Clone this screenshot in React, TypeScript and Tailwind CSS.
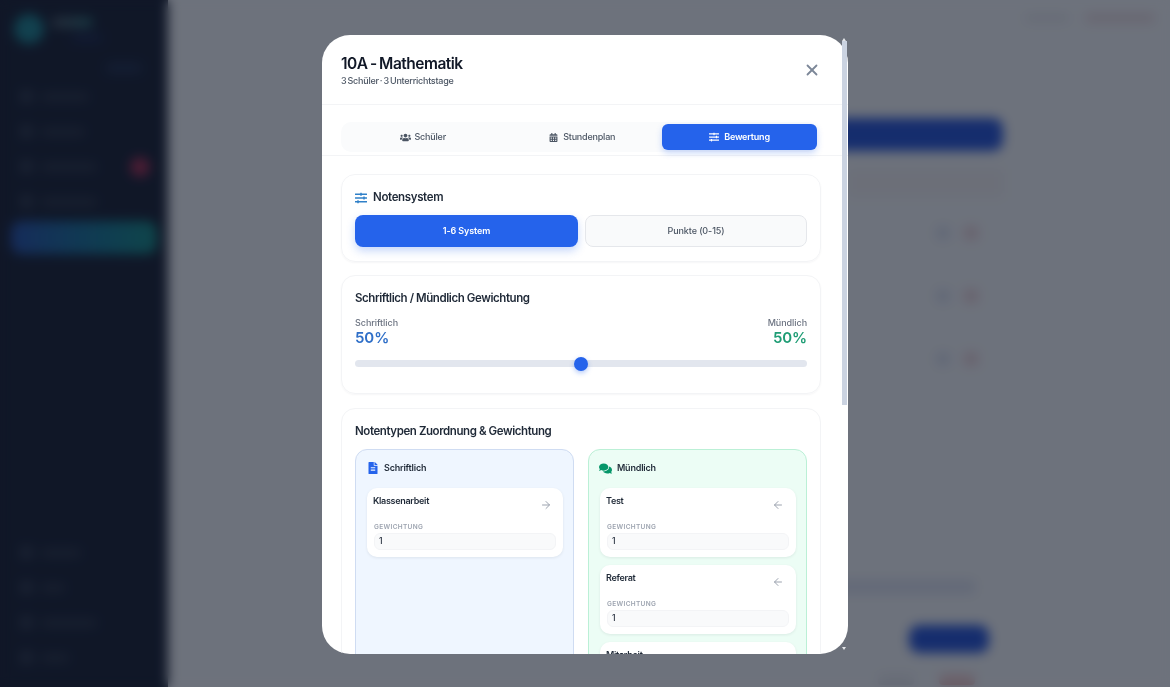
import { FaUsers, FaCalendarAlt, FaSlidersH, FaFileAlt, FaComments } from "react-icons/fa";
import { FiArrowLeft, FiArrowRight, FiX } from "react-icons/fi";

function NavBlob({ w, badge }: { w: string; badge?: boolean }) {
  return (
    <div className="flex items-center gap-[8px] h-[35px] pl-[20px] pr-[18px]">
      <div className="w-[13px] h-[13px] rounded bg-[#2a3446]" />
      <div className={`h-[8px] rounded bg-[#262f40] ${w}`} />
      {badge ? <div className="ml-auto w-[20px] h-[20px] rounded-full bg-[#a3264a]" /> : null}
    </div>
  );
}

function RowActions({ className }: { className: string }) {
  return (
    <div className={`flex justify-end gap-[14px] pr-[25px] ${className}`}>
      <div className="w-[14px] h-[14px] rounded bg-[#dce2f0]" />
      <div className="w-[14px] h-[14px] rounded bg-[#ecd3d8]" />
    </div>
  );
}

function TypeCard({ name, dir, nameOnly }: { name: string; dir: "left" | "right"; nameOnly?: boolean }) {
  return (
    <div className="bg-white rounded-[10px] px-[7px] pt-[7px] h-[69px] shrink-0 shadow-[0_1px_3px_rgba(15,23,42,0.08)]">
      <div className="flex items-start justify-between">
        <span className="text-[9px] leading-[12px] font-semibold tracking-[-0.3px] text-[#1f2937] ml-[-1px]">{name}</span>
        {nameOnly ? null : dir === "left" ? (
          <span className="mt-[4px] mr-[5px] text-[#9ca3af]">
            <FiArrowLeft className="w-[12px] h-[12px]" />
          </span>
        ) : (
          <span className="mt-[4px] mr-[4px] text-[#9ca3af]">
            <FiArrowRight className="w-[12px] h-[12px]" />
          </span>
        )}
      </div>
      {nameOnly ? null : (
        <>
          <div className="mt-[12px] text-[6.5px] leading-[8px] font-semibold tracking-[0.35px] text-[#9ca3af]">GEWICHTUNG</div>
          <div className="mt-[2px] h-[17px] rounded-[6px] bg-[#f9fafb] border border-[#f3f4f6] flex items-center pl-[4px] text-[8.5px] font-medium text-[#1f2937]">1</div>
        </>
      )}
    </div>
  );
}

export default function App() {
  return (
    <div className="relative w-[1170px] h-[687px] overflow-hidden bg-[#f8fafc] flex" style={{ fontFamily: "Inter, 'Noto Sans', sans-serif" }}>
      <aside className="w-[168px] h-full shrink-0 bg-[#0f172a] flex flex-col pt-[14px]">
        <div className="flex items-start gap-[8px] pl-[14px]">
          <div className="w-[30px] h-[30px] rounded-full bg-[#14808c]" />
          <div className="flex flex-col gap-[8px] pt-[4px]">
            <div className="w-[40px] h-[9px] rounded bg-gradient-to-r from-[#4b5563] to-[#1f7a7c]" />
            <div className="w-[30px] h-[6px] ml-[20px] rounded bg-[#172554]" />
          </div>
        </div>
        <div className="w-[36px] h-[10px] ml-[106px] mt-[19px] rounded bg-[#1b2a48]" />
        <div className="mt-[6px] flex flex-col">
          <NavBlob w="w-[48px]" />
          <NavBlob w="w-[44px]" />
          <NavBlob w="w-[56px]" badge />
          <NavBlob w="w-[56px]" />
        </div>
        <div className="mx-[11px] mt-[2px] h-[33px] rounded-[10px] bg-gradient-to-r from-[#1e4aa8] to-[#0f8a80]" />
        <div className="mt-auto mb-[12px] flex flex-col">
          <NavBlob w="w-[40px]" />
          <NavBlob w="w-[24px]" />
          <NavBlob w="w-[56px]" />
          <NavBlob w="w-[28px]" />
        </div>
      </aside>
      <main className="flex-1 flex flex-col pr-[167px] pt-[12px]">
        <div className="h-[12px] flex justify-end items-center gap-[16px] mr-[-152px]">
          <div className="w-[44px] h-[8px] rounded bg-[#e6e8ec]" />
          <div className="w-[70px] h-[10px] rounded bg-[#ecdde1]" />
        </div>
        <div className="mt-[94px] h-[33px] ml-auto w-[300px] rounded-[10px] bg-[#1d4ed8]" />
        <div className="mt-[18px] h-[28px] ml-auto w-[155px] bg-[#f4f2f3]" />
        <RowActions className="mt-[29px]" />
        <RowActions className="mt-[49px]" />
        <RowActions className="mt-[49px]" />
        <div className="flex-1" />
        <div className="h-[14px] mb-[31px] ml-auto w-[200px] mr-[28px] bg-[#dfe4f2]" />
        <div className="ml-auto mr-[14px] w-[80px] h-[28px] rounded-[10px] bg-[#1d4ed8]" />
        <div className="mt-[22px] mb-[2px] h-[10px] flex justify-end gap-[25px] pr-[28px]">
          <div className="w-[36px] h-[10px] rounded bg-[#e6e8ec]" />
          <div className="w-[36px] h-[10px] rounded bg-[#f0c4c4]" />
        </div>
      </main>

      <div className="absolute inset-0 bg-[#111827]/60 backdrop-blur-[6px] flex justify-center pt-[35px]">
        <div className="relative w-[526px] h-[619px]">
          <div className="w-full h-full bg-white rounded-[28px] overflow-hidden flex flex-col">
            <header className="h-[70px] shrink-0 border-b border-[#f3f4f6] flex items-center justify-between pl-[19px] pr-[27px]">
              <div>
                <h2 className="text-[15.5px] leading-[22px] mt-[1px] font-semibold tracking-[-0.5px] [word-spacing:-1px] text-[#111827]">10A - Mathematik</h2>
                <p className="text-[9px] leading-[12px] font-medium tracking-[-0.25px] [word-spacing:-1px] text-[#4b5563]">3 Schüler · 3 Unterrichtstage</p>
              </div>
              <FiX className="w-[18px] h-[18px] text-[#7c8798]" strokeWidth={2.4} />
            </header>
            <div className="h-[51px] shrink-0 border-b border-[#f3f4f6] pl-[19px] pt-[17px]">
              <div className="w-[476px] h-[30px] bg-[#fafbfc] rounded-[10px] flex items-center">
                <div className="flex-1 flex items-center justify-center gap-[4px] pl-[2px] text-[9px] tracking-[-0.2px] font-medium text-[#4b5563]">
                  <FaUsers className="w-[11px] h-[11px]" />Schüler
                </div>
                <div className="flex-1 flex items-center justify-center gap-[5px] text-[9px] tracking-[-0.2px] font-medium text-[#4b5563]">
                  <FaCalendarAlt className="w-[9px] h-[9px]" />Stundenplan
                </div>
                <div className="w-[155px] h-[26px] rounded-[6px] bg-[#2563eb] text-white flex items-center justify-center gap-[5px] text-[9px] tracking-[-0.2px] font-semibold shadow-[0_3px_6px_rgba(37,99,235,0.25)]">
                  <FaSlidersH className="w-[10px] h-[10px]" />Bewertung
                </div>
              </div>
            </div>
            <div className="flex-1 min-h-0 pl-[19px] pr-[27px] pt-[18px] flex flex-col overflow-hidden">
              <section className="h-[88px] mb-[13px] shrink-0 rounded-[14px] border border-[#f3f4f6] shadow-[0_1px_2px_rgba(15,23,42,0.04)] px-[13px] pt-[14px]">
                <div className="flex items-center gap-[6px] h-[18px]">
                  <FaSlidersH className="w-[12px] h-[12px] text-[#2f80c8]" />
                  <h3 className="text-[11.5px] font-semibold tracking-[-0.35px] text-[#1f2937]">Notensystem</h3>
                </div>
                <div className="mt-[8px] flex gap-[7px]">
                  <button className="w-[223px] h-[32px] rounded-[8px] bg-[#2563eb] text-white text-[9px] tracking-[-0.1px] font-semibold shadow-[0_4px_8px_rgba(37,99,235,0.25)]">1-6 System</button>
                  <button className="flex-1 h-[32px] rounded-[8px] bg-[#f9fafb] border border-[#e5e7eb] text-[#4b5563] text-[9px] tracking-[-0.1px] font-medium">Punkte (0-15)</button>
                </div>
              </section>
              <section className="h-[119px] mb-[14px] shrink-0 rounded-[14px] border border-[#f3f4f6] shadow-[0_1px_2px_rgba(15,23,42,0.04)] px-[13px] pt-[13px]">
                <h3 className="text-[11.5px] leading-[18px] font-semibold tracking-[-0.42px] text-[#1f2937]">Schriftlich / Mündlich Gewichtung</h3>
                <div className="mt-[10px] flex justify-between">
                  <div>
                    <div className="text-[9px] leading-[12px] font-medium tracking-[-0.05px] text-[#6b7280]">Schriftlich</div>
                    <div className="text-[15px] leading-[18px] font-semibold tracking-[-0.1px] text-[#2f6fc8]">50%</div>
                  </div>
                  <div className="text-right">
                    <div className="text-[9px] leading-[12px] font-medium tracking-[-0.05px] text-[#6b7280]">Mündlich</div>
                    <div className="text-[15px] leading-[18px] font-semibold tracking-[-0.1px] text-[#1f9d75]">50%</div>
                  </div>
                </div>
                <div className="relative mt-[13px] h-[7px] rounded-full bg-[#e2e6ee]">
                  <div className="absolute left-1/2 top-1/2 -translate-x-1/2 -translate-y-1/2 w-[14px] h-[14px] rounded-full bg-[#2563eb] shadow-[0_2px_5px_rgba(37,99,235,0.35)]" />
                </div>
              </section>
              <section className="shrink-0 h-[400px] rounded-[14px] border border-[#f3f4f6] px-[13px] pt-[13px]">
                <h3 className="text-[11.5px] leading-[18px] font-semibold tracking-[-0.42px] text-[#1f2937]">Notentypen Zuordnung &amp; Gewichtung</h3>
                <div className="mt-[9px] flex gap-[14px]">
                  <div className="w-[219px] h-[340px] rounded-[12px] border border-[#cfdcf2] bg-[#eff6ff] pl-[11px] pr-[10px] pt-[11px]">
                    <div className="flex items-center gap-[6px] h-[14px] pl-[1px]">
                      <FaFileAlt className="w-[10px] h-[12px] text-[#2563eb]" />
                      <span className="text-[9px] tracking-[-0.2px] font-semibold text-[#1f2937]">Schriftlich</span>
                    </div>
                    <div className="mt-[13px] flex flex-col gap-[8px]">
                      <TypeCard name="Klassenarbeit" dir="right" />
                    </div>
                  </div>
                  <div className="w-[219px] h-[340px] rounded-[12px] border border-[#bbf0d6] bg-[#ecfdf5] pl-[11px] pr-[10px] pt-[11px]">
                    <div className="flex items-center gap-[5px] h-[14px] ml-[-1px]">
                      <FaComments className="w-[13px] h-[13px] text-[#059669]" />
                      <span className="text-[9px] tracking-[-0.2px] font-semibold text-[#1f2937]">Mündlich</span>
                    </div>
                    <div className="mt-[13px] flex flex-col gap-[8px]">
                      <TypeCard name="Test" dir="left" />
                      <TypeCard name="Referat" dir="left" />
                      <TypeCard name="Mitarbeit" dir="left" nameOnly />
                    </div>
                  </div>
                </div>
              </section>
            </div>
          </div>
          <div className="absolute right-[1px] top-[6px] w-[5px] h-[364px] bg-[#cbd3e1]" />
          <svg className="absolute right-[2px] top-[3px] w-[4px] h-[3px]" viewBox="0 0 4 3"><path d="M2 0 4 3H0z" fill="#e5e7eb" /></svg>
          <svg className="absolute right-[2px] bottom-[4px] w-[4px] h-[3px]" viewBox="0 0 4 3"><path d="M0 0h4L2 3z" fill="#e5e7eb" /></svg>
        </div>
      </div>
    </div>
  );
}
